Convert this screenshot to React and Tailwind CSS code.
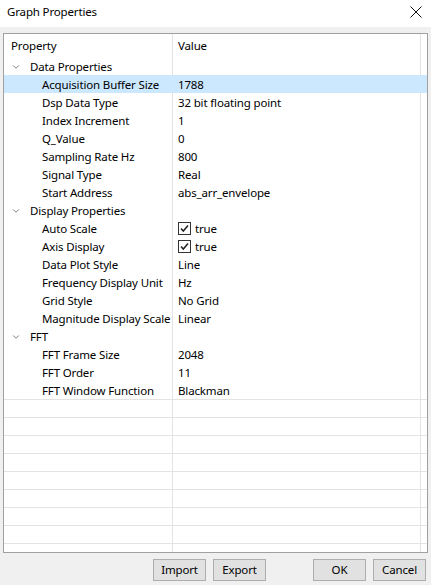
import { ChevronDown } from "lucide-react";

const groups = [
  {
    name: "Data Properties",
    items: [
      ["Acquisition Buffer Size", "1788", true],
      ["Dsp Data Type", "32 bit floating point"],
      ["Index Increment", "1"],
      ["Q_Value", "0"],
      ["Sampling Rate Hz", "800"],
      ["Signal Type", "Real"],
      ["Start Address", "abs_arr_envelope"],
    ],
  },
  {
    name: "Display Properties",
    items: [
      ["Auto Scale", "true", false, true],
      ["Axis Display", "true", false, true],
      ["Data Plot Style", "Line"],
      ["Frequency Display Unit", "Hz"],
      ["Grid Style", "No Grid"],
      ["Magnitude Display Scale", "Linear"],
    ],
  },
  {
    name: "FFT",
    items: [
      ["FFT Frame Size", "2048"],
      ["FFT Order", "11"],
      ["FFT Window Function", "Blackman"],
    ],
  },
];

function Check() {
  return (
    <span className="w-[13px] h-[13px] border border-[#333] bg-white flex items-center justify-center mr-[4px]">
      <svg width="11" height="11" viewBox="0 0 11 11">
        <path d="M2 5.5 L4.3 8 L9 2.5" fill="none" stroke="#222" strokeWidth="1.5" />
      </svg>
    </span>
  );
}

function Row({ left, right, selected, border }) {
  const line = selected ? "border-transparent" : "border-[#e3e3e3]";
  return (
    <div
      className={`flex h-[18px] shrink-0 ${selected ? "bg-[#cce8ff]" : ""} ${
        border ? "border-t border-[#e3e3e3]" : ""
      }`}
    >
      <div className="w-[168px] flex items-center pt-[1px]">{left}</div>
      <div className={`w-[248px] flex items-center border-l pl-[5px] pt-[1px] ${line}`}>{right}</div>
      <div className={`flex-1 border-l ${line}`} />
    </div>
  );
}

export default function App() {
  return (
    <div className="w-[431px] h-[585px] bg-[#f0f0f0] flex flex-col text-[11.5px] tracking-[-0.15px] text-black font-['Segoe_UI','Noto_Sans',sans-serif] overflow-hidden">
      {/* title bar */}
      <div className="h-[27px] bg-white flex items-center justify-between pl-[7px] pr-[9px] pb-[3px] shrink-0">
        <span>Graph Properties</span>
        <svg width="12" height="12" viewBox="0 0 12 12">
          <path d="M0.5 0.5 L11.5 11.5 M11.5 0.5 L0.5 11.5" stroke="#111" strokeWidth="1" />
        </svg>
      </div>

      {/* property grid */}
      <div className="px-[3px] pt-[6px] shrink-0">
        <div className="h-[520px] border border-[#a0a0a0] bg-white overflow-hidden flex flex-col">
          <div className="flex h-[23px] shrink-0">
            <div className="w-[168px] flex items-center pl-[7px] pt-[1px]">Property</div>
            <div className="w-[248px] flex items-center border-l border-[#e3e3e3] pl-[5px] pt-[1px]">Value</div>
            <div className="flex-1 border-l border-[#e3e3e3]" />
          </div>

          {groups.map((g) => (
            <div key={g.name} className="flex flex-col">
              <Row
                left={
                  <div className="flex items-center">
                    <ChevronDown size={10} strokeWidth={2} className="ml-[7px] mr-[9px] text-[#666]" />
                    <span>{g.name}</span>
                  </div>
                }
              />
              {g.items.map(([name, value, selected, check]) => (
                <Row
                  key={name}
                  selected={selected}
                  left={<span className="pl-[38px] whitespace-nowrap">{name}</span>}
                  right={
                    <div className="flex items-center whitespace-nowrap">
                      {check && <Check />}
                      <span>{value}</span>
                    </div>
                  }
                />
              ))}
            </div>
          ))}

          {Array.from({ length: 9 }).map((_, i) => (
            <Row key={i} border />
          ))}
        </div>
      </div>

      {/* buttons */}
      <div className="flex pl-[153px] mt-[6px] shrink-0">
        <button className="w-[53px] h-[22px] bg-[#e1e1e1] border border-[#adadad]">Import</button>
        <button className="w-[53px] h-[22px] bg-[#e1e1e1] border border-[#adadad] ml-[7px]">Export</button>
        <button className="w-[53px] h-[22px] bg-[#e1e1e1] border border-[#adadad] ml-[47px]">OK</button>
        <button className="w-[53px] h-[22px] bg-[#e1e1e1] border border-[#adadad] ml-[7px]">Cancel</button>
      </div>
    </div>
  );
}
